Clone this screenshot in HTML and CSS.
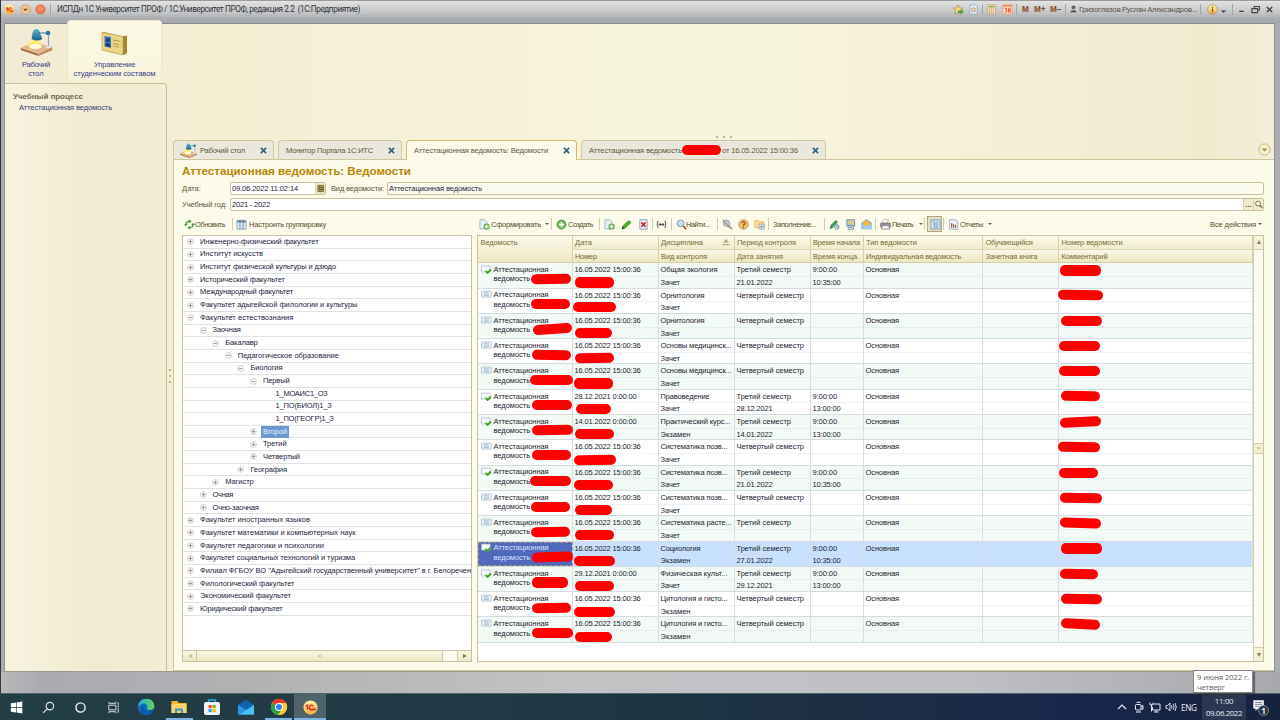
FILE: index.html
```html
<!DOCTYPE html>
<html lang="ru">
<head>
<meta charset="utf-8">
<title>1С:Университет ПРОФ</title>
<link rel="stylesheet" href="styles.css">
</head>
<body>
<svg class="defs" aria-hidden="true">
  <defs>
    <linearGradient id="blue" x1="0" y1="0" x2="0" y2="1"><stop offset="0" stop-color="#5fb5cf"/><stop offset="1" stop-color="#17658c"/></linearGradient>
    <linearGradient id="orange" x1="0" y1="0" x2="0" y2="1"><stop offset="0" stop-color="#fff6b0"/><stop offset="1" stop-color="#f3ae3c"/></linearGradient>
    <linearGradient id="edgeg" x1="0" y1="0" x2="1" y2="1"><stop offset="0" stop-color="#1583d4"/><stop offset="1" stop-color="#0b4f9e"/></linearGradient>
    <linearGradient id="edgetop" x1="0" y1="0" x2="1" y2="0"><stop offset="0" stop-color="#2aa8dc"/><stop offset="1" stop-color="#62d45a"/></linearGradient>
    <symbol id="lamp" viewBox="0 0 32 28">
      <path d="M0 20 13 14 32 19 18 26z" fill="#e3b88a"/><path d="M0 20v2l18 6v-2z" fill="#a2683f"/><path d="M18 26v2l14-6v-3z" fill="#bd875c"/>
      <path d="M11 11 7 18q8 6 14 0l-2-7z" fill="#fff16a" opacity=".85"/><ellipse cx="15" cy="18.500" rx="6" ry="2.500" fill="#fffde0"/>
      <path d="M12 5q1-4 4-4 3 0 3 3l3 7q-6 3-11 0z" fill="url(#blue)"/><path d="M18 5h9" stroke="#2b6f96" stroke-width="1"/><circle cx="27.500" cy="5" r="2.300" fill="#2478a3"/><path d="M28 7v11" stroke="#94a6b4" stroke-width="1.200"/><ellipse cx="28" cy="19" rx="3" ry="1.200" fill="#dbe3e8"/>
    </symbol>
    <symbol id="docplus" viewBox="0 0 12 12"><path d="M1 .8h5.500l2 2v8h-7.500z" fill="#e6f0f7" stroke="#8ea9bd" stroke-width=".8"/><circle cx="8.300" cy="8.300" r="3.500" fill="#6fae5a"/><path d="M8.300 6.200v4.200M6.200 8.300h4.200" stroke="#fff" stroke-width="1.200"/></symbol>
    <symbol id="plus" viewBox="0 0 12 12"><circle cx="6" cy="6" r="5" fill="#7bb55f" stroke="#4f8e42" stroke-width=".8"/><path d="M6 3.200v5.600M3.200 6h5.600" stroke="#fff" stroke-width="1.700"/></symbol>
    <symbol id="refresh" viewBox="0 0 12 12"><path d="M2 6.500a4 3.600 0 0 1 4-4M10 5.500a4 3.600 0 0 1-4 4" fill="none" stroke="#3f9a3f" stroke-width="1.500"/><path d="M5.500.5 8.500 2.500 5.500 4.500zM6.500 11.500 3.500 9.500 6.500 7.500zM0 5.500h4L2 8zM8 6.500h4L10 4z" fill="#3f9a3f"/></symbol>
    <symbol id="grid" viewBox="0 0 12 12"><path d="M1 1.500h10v9.500H1z" fill="#eaf3fa" stroke="#7294b2" stroke-width=".8"/><path d="M1 1.500h10V4H1z" fill="#7d99b5"/><path d="M4.300 1v10M7.700 1v10" stroke="#56789a" stroke-width=".9"/><path d="M1 7h10" stroke="#a6bfd4" stroke-width=".6"/></symbol>
    <symbol id="pencil" viewBox="0 0 12 12"><path d="M1 11 2 7.500 8.500 1.500 11 3.800 4.500 10z" fill="#4fae2c" stroke="#2b7a1e" stroke-width=".6"/><path d="M1 11 2 8.300 3.700 10z" fill="#1d4515"/></symbol>
    <symbol id="del" viewBox="0 0 12 12"><path d="M2 .8h8v10.400H2z" fill="#e9f1f7" stroke="#8199ad" stroke-width=".9"/><path d="M3.700 3.700 8.300 8.500M8.300 3.700 3.700 8.500" stroke="#d0202a" stroke-width="1.700"/></symbol>
    <symbol id="range" viewBox="0 0 12 12"><path d="M2.300 2Q.2 6 2.300 10M9.700 2Q11.800 6 9.700 10" fill="none" stroke="#454b52" stroke-width="1"/><path d="M3.500 6h5" stroke="#454b52"/><path d="M5 4 2.500 6 5 8zM7 4 9.500 6 7 8z" fill="#454b52"/></symbol>
    <symbol id="find" viewBox="0 0 12 12"><circle cx="5" cy="4.700" r="3.700" fill="#c5def2" stroke="#8297ab" stroke-width="1"/><path d="m7.700 7.500 3.500 3.500" stroke="#9c5b38" stroke-width="1.800"/></symbol>
    <symbol id="nofind" viewBox="0 0 12 12"><circle cx="5" cy="4.700" r="3.500" fill="#c9ccd0" stroke="#9298a2"/><path d="m7.500 7.500 3.500 3.500" stroke="#a9a096" stroke-width="1.800"/><path d="m1 1 8 9" stroke="#8d8f94" stroke-width="1.300"/></symbol>
    <symbol id="help" viewBox="0 0 12 12"><circle cx="6" cy="6" r="5.200" fill="#f4bd70" stroke="#b9824a" stroke-width=".8"/><path d="M4.200 4.700Q4.300 3 6 3t1.800 1.500Q7.800 5.600 6 6.600v.8M6 8.200v1.300" fill="none" stroke="#8a4318" stroke-width="1.200"/></symbol>
    <symbol id="folder" viewBox="0 0 12 12"><path d="M.8 1.500h4l1 1.500h5v6.500h-10z" fill="#f8dc91" stroke="#d2a855" stroke-width=".7"/><rect x="5.500" y="5.500" width="5.500" height="5.500" fill="#dfe7ea" stroke="#8293a0" stroke-width=".7"/><circle cx="8.300" cy="8.300" r="1.300" fill="#8694a2"/></symbol>
    <symbol id="sign" viewBox="0 0 12 12"><path d="M.8 10.500 2 6.500 7.500 1 10 3.200 4.500 8.800z" fill="#46935a"/><path d="m1 10.500 3-1.500" stroke="#234e3a"/><circle cx="8.500" cy="8.700" r="2.600" fill="#dcebef" stroke="#518080" stroke-width=".8"/><path d="M8.500 7v2h1.300" fill="none" stroke="#376878" stroke-width=".7"/></symbol>
    <symbol id="list" viewBox="0 0 12 12"><path d="M2 .8h8.500v7H2z" fill="#b9cad7" stroke="#526a7d" stroke-width=".7"/><path d="M3.500 2.500h5.500v2H3.500z" fill="#f2cb4d"/><path d="M3.500 7h5.700v4.300H3.500z" fill="#eaf1f5" stroke="#60798e" stroke-width=".8"/><path d="M4.500 9h3.500" stroke="#3b5872"/></symbol>
    <symbol id="mail" viewBox="0 0 12 12"><path d="M.8 4 6 .5 11.200 4v7H.8z" fill="#79b1de" stroke="#71a1cc" stroke-width=".6"/><ellipse cx="6" cy="4.600" rx="3.800" ry="3" fill="#f2ba3b"/><path d="M.8 5.500 6 8l5.200-2.500V11H.8z" fill="#a3cdee"/></symbol>
    <symbol id="print" viewBox="0 0 12 12"><path d="M3.500.8h5.500l-1 4h-6z" fill="#fff" stroke="#8c8c8c" stroke-width=".6"/><path d="M.8 4.500h10.400v4.500H.8z" fill="#9a9c9e" stroke="#555" stroke-width=".7"/><path d="M2.500 7h7l1 4h-9z" fill="#f4f4f4" stroke="#666" stroke-width=".7"/></symbol>
    <symbol id="report" viewBox="0 0 12 12"><path d="M1.500.8h7l2 2v8.400h-9z" fill="#e9f2f8" stroke="#8ba6bb" stroke-width=".8"/><path d="M4 9.500V4.500M8.300 9.500V6.500" stroke="#d03528" stroke-width="1.300"/><path d="M6.200 9.500V5.500" stroke="#388a3d" stroke-width="1.200"/></symbol>
    <symbol id="panel" viewBox="0 0 12 12"><path d="M1 1h10v10H1z" fill="#d9eaf5" stroke="#6992b2" stroke-width=".9"/><path d="M3 3h1.500v6H6M4.500 5.500H9M6 3.500h3M6 7.500h3M6 9h3" fill="none" stroke="#6287a6" stroke-width=".8"/></symbol>
    <symbol id="row" viewBox="0 0 12 10"><path d="M.5 1h10.500v6.500H.5z" fill="#eef5f9" stroke="#a2b6c4" stroke-width=".8"/><path d="M3 2.700h5.700M3 4.300h5.700M3 5.900h5.700" stroke="#a5bfd2" stroke-width="1"/></symbol>
    <symbol id="posted" viewBox="0 0 12 10"><path d="M.5 1h9.500v6.500H.5z" fill="#f5f9fa" stroke="#a8bac6" stroke-width=".8"/><path d="m5 6.300 2.200 2.200 3.600-3.800" fill="none" stroke="#43a424" stroke-width="2.100"/></symbol>
    <symbol id="logo1c" viewBox="0 0 16 16"><circle cx="8" cy="8" r="7.600" fill="url(#orange)"/><path d="M3 6.500 4.800 5.500v5M11 6.500Q10.300 5.500 9 5.500 6.800 5.700 6.800 8T9 10.400h4.500" fill="none" stroke="#df2a1a" stroke-width="1.500"/><path d="M13.500 8.600H9.500" stroke="#df2a1a" stroke-width=".8"/></symbol>
  </defs>
</svg>
<div class="screen">
  <header class="titlebar">
    <svg class="t-ico" viewBox="0 0 16 16"><use href="#logo1c"/></svg>
    <svg class="t-ico" viewBox="0 0 16 16"><circle cx="8" cy="8" r="7" fill="#efc890" stroke="#b79b77"/><path d="M4.500 7h7L8 10.500z" fill="#74502b"/></svg>
    <svg class="t-ico" viewBox="0 0 16 16"><circle cx="8" cy="8" r="7" fill="#f1764f" stroke="#cc8269"/><circle cx="8" cy="6.500" r="4" fill="#f88e66"/></svg>
    <i class="t-sep"></i>
    <span class="t-title" data-w="305">ИСПДн 1С Университет ПРОФ / 1С:Университет ПРОФ, редакция 2.2&nbsp; (1С:Предприятие)</span>
    <svg class="t-ico" viewBox="0 0 12 12"><path d="m5.500.8 1.500 3.400 3.800.4-2.800 2.500.8 3.700-3.300-1.900-3.300 1.900.8-3.700L.3 4.600l3.700-.4z" fill="#f8d680" stroke="#a9894f" stroke-width=".7"/><path d="M5.500 7h3V5.300L12 8.500l-3.500 3V10h-3z" fill="#51a83c"/></svg>
    <svg class="t-ico" viewBox="0 0 12 12"><path d="M2 1h6l2 2v8H2z" fill="#e3edf5" stroke="#89a2b8" stroke-width=".8"/><path d="m6 3.500.8 1.800 2 .1-1.500 1.300.5 1.900L6 7.600 4.200 8.600l.5-1.900-1.500-1.300 2-.1z" fill="#fbeab4" stroke="#95713a" stroke-width=".6"/></svg>
    <i class="t-sep"></i>
    <svg class="t-ico" viewBox="0 0 12 12"><path d="M1.500 1h9v10h-9z" fill="#f4e6c4" stroke="#c39b64" stroke-width=".8"/><path d="M3 3h6" stroke="#6aa040" stroke-width="1.400"/><path d="M3 5.500h6M3 7.500h6M3 9.500h6" stroke="#b6744c" stroke-dasharray="1.200 1"/></svg>
    <svg class="t-ico" viewBox="0 0 12 12"><path d="M1 1h10v10H1z" fill="#fbe5d2" stroke="#d89167" stroke-width=".8"/><path d="M1 1h10v2.500H1z" fill="#ee9a6b"/><path d="M3 5h2v4H3M4 7h1M7 5h2v4H7zM7 7h2" fill="none" stroke="#e0552a" stroke-width="1"/></svg>
    <i class="t-sep"></i>
    <b class="mem">M</b><b class="mem">M+</b><b class="mem">M−</b>
    <i class="t-sep"></i>
    <svg class="t-user" viewBox="0 0 8 10"><circle cx="4" cy="2.500" r="2.200" fill="#615f5b"/><path d="M.5 8.500Q.5 5.500 4 5.500t3.500 3z" fill="#615f5b"/></svg>
    <span class="t-name" data-w="118">Гризоглазов Руслан Александров...</span>
    <i class="t-sep"></i>
    <svg class="t-ico" viewBox="0 0 16 16"><circle cx="8" cy="8" r="7" fill="url(#orange)" stroke="#ae8350"/><path d="M8 3.500v1.800M8 6.500v6" stroke="#68532a" stroke-width="1.800"/></svg>
    <svg class="t-sys" viewBox="0 0 10 10"><path d="M2 6h6L5 9z" fill="#444"/></svg>
    <i class="t-sep"></i>
    <svg class="t-sys" viewBox="0 0 10 10"><path d="M2.500 7h5" stroke="#444" stroke-width="1.500"/></svg>
    <svg class="t-sys" viewBox="0 0 10 10"><path d="M3.500 3.500V1.700h5.800v4H7.500M1 4h6.300v4.500H1z" fill="none" stroke="#444" stroke-width="1.200"/></svg>
    <svg class="t-sys" viewBox="0 0 10 10"><path d="m2 2.200 6 5.600M8 2.200 2 7.800" stroke="#444" stroke-width="1.700"/></svg>
  </header>

  <main class="client">
    <aside class="left">
      <nav class="sections">
        <a class="section section-home"><svg class="lamp" viewBox="0 0 32 28"><use href="#lamp"/></svg><span data-w="28">Рабочий</span><span data-w="15.500">стол</span></a>
        <a class="section section-active">
          <svg class="card" viewBox="0 0 28 26"><path d="M1 1h2l22 5v17l-3 1L1 19z" fill="#b39342"/><path d="M1 1.500 22 5.500V24L1 19z" fill="#ecd486" stroke="#cda950" stroke-width=".8"/><path d="m22 5.500 4-1V22l-4 2z" fill="#a98532"/><path d="M3.500 5 10 6v11l-6.500-1.500z" fill="#3b76bd"/><circle cx="6.800" cy="9" r="1.900" fill="#173a6a"/><path d="M4.300 15q.4-3 2.500-3t2.800 4z" fill="#173a6a"/><path d="m12 9 7.500 1.500M12 12.500l6 1.200M12 15l6 1.200" stroke="#a58a4a" stroke-width=".8"/></svg>
          <span data-w="41">Управление</span><span data-w="82">студенческим составом</span></a>
      </nav>
      <section class="side">
        <h3 class="side-title"><span data-w="70">Учебный процесс</span></h3>
        <a class="side-link"><span data-w="93">Аттестационная ведомость</span></a>
      </section>
    </aside>
    <div class="splitter"><i></i><i></i><i></i></div>

    <section class="work">
      <div class="top-grip"><i></i><i></i><i></i></div>
      <nav class="tabs">
        <div class="tab tab-home"><svg class="tab-lamp" viewBox="0 0 32 28"><use href="#lamp"/></svg><span data-w="45">Рабочий стол</span><svg class="x" viewBox="0 0 8 8"><path d="m1 1 6 6M7 1 1 7"/></svg></div>
        <div class="tab tab-monitor"><span data-w="87">Монитор Портала 1С:ИТС</span><svg class="x" viewBox="0 0 8 8"><path d="m1 1 6 6M7 1 1 7"/></svg></div>
        <div class="tab tab-current"><span data-w="134">Аттестационная ведомость: Ведомости</span><svg class="x" viewBox="0 0 8 8"><path d="m1 1 6 6M7 1 1 7"/></svg></div>
        <div class="tab tab-doc"><span data-w="93">Аттестационная ведомость</span><i class="tab-ink"></i><span data-w="76">от 16.05.2022 15:00:36</span><svg class="x" viewBox="0 0 8 8"><path d="m1 1 6 6M7 1 1 7"/></svg></div>
        <svg class="tab-more" viewBox="0 0 13 13"><circle cx="6.500" cy="6.500" r="5.600" fill="#f7f1cc" stroke="#c2b681"/><path d="M3.500 5.500h6l-3 3z" fill="#a5935a"/></svg>
      </nav>
      <div class="page">
        <h1 class="heading"><span data-w="229">Аттестационная ведомость: Ведомости</span></h1>
        <div class="field-row">
          <label class="lbl-date"><span data-w="19">Дата:</span></label>
          <div class="input date"><span data-w="66">09.06.2022 11:02:14</span><svg class="cal" viewBox="0 0 10 12"><path d="M2.500 3.500h5.500v5.500H2.500z" fill="#b7a765"/><path d="M2 2.500h6.500v7H2zM2 5h6.500M2 7.200h6.500M4.200 2v7.500M6.500 2v7.500" fill="none" stroke="#75652e" stroke-width="1"/></svg></div>
          <label class="lbl-kind"><span data-w="53">Вид ведомости:</span></label>
          <div class="input kind"><span data-w="93">Аттестационная ведомость</span></div>
        </div>
        <div class="field-row">
          <label class="lbl-year"><span data-w="45">Учебный год:</span></label>
          <div class="input year"><span data-w="38">2021 - 2022</span><span class="dots">...</span><svg class="mag" viewBox="0 0 10 12"><circle cx="4.500" cy="5" r="2.700" fill="#fff" stroke="#75652e"/><path d="m6.500 7 2.500 2.500" stroke="#75652e" stroke-width="1.500"/></svg></div>
        </div>
        <div class="columns">
          <div class="tree-col">
            <div class="bar bar-tree">
              <svg><use href="#refresh"/></svg><span data-w="33">Обновить</span><i class="sep"></i><svg><use href="#grid"/></svg><span data-w="80">Настроить группировку</span>
            </div>
            <div class="tree">
              <div class="tree-rows" id="tree"></div>
              <div class="hscroll"><b class="hs-left"></b><b class="hs-thumb"></b><b class="hs-track"></b><b class="hs-right"></b></div>
            </div>
          </div>
          <div class="table-col">
            <div class="bar bar-table">
              <svg><use href="#docplus"/></svg><span data-w="51">Сформировать</span><i class="caret"></i><i class="sep"></i>
              <svg><use href="#plus"/></svg><span data-w="27.500">Создать</span><i class="sep"></i>
              <svg><use href="#docplus"/></svg><svg><use href="#pencil"/></svg><svg><use href="#del"/></svg><i class="sep"></i>
              <svg><use href="#range"/></svg><i class="sep"></i>
              <svg><use href="#find"/></svg><span data-w="27">Найти...</span><i class="sep"></i>
              <svg><use href="#nofind"/></svg><svg><use href="#help"/></svg><svg><use href="#folder"/></svg><i class="sep"></i>
              <span data-w="46">Заполнение...</span><i class="sep"></i>
              <svg><use href="#sign"/></svg><svg><use href="#list"/></svg><svg><use href="#mail"/></svg><i class="sep"></i>
              <svg><use href="#print"/></svg><span data-w="23.500">Печать</span><i class="caret"></i><i class="sep"></i>
              <b class="pressed"><svg><use href="#panel"/></svg></b><i class="sep"></i>
              <svg><use href="#report"/></svg><span data-w="25">Отчеты</span><i class="caret"></i>
              <span class="all" data-w="46">Все действия</span><i class="caret"></i>
            </div>
            <div class="table">
              <div class="table-main">
                <div class="thead" id="thead"></div>
                <div id="rows"></div>
              </div>
              <div class="vscroll"><b class="vs-up"></b><b class="vs-thumb"></b><b class="vs-down"></b></div>
            </div>
          </div>
        </div>
      </div>
    </section>
  </main>
  <footer class="status"></footer>

  <div class="taskbar">
    <div class="task"><svg viewBox="0 0 16 16"><path d="m2 3.500 5.500-.8v4.900H2zM8.200 2.600l6-.9v5.900h-6zM2 8.400h5.500v4.900L2 12.500zM8.200 8.400h6v5.900l-6-.9z" fill="#fff"/></svg></div>
    <div class="task"><svg viewBox="0 0 16 16"><circle cx="9.500" cy="6.500" r="4" fill="none" stroke="#e4e9eb" stroke-width="1.200"/><path d="m6.600 9.400-4.300 4.300" stroke="#e4e9eb" stroke-width="1.200"/></svg></div>
    <div class="task"><svg viewBox="0 0 16 16"><circle cx="8" cy="8" r="4.900" fill="none" stroke="#f0f3f4" stroke-width="1.500"/></svg></div>
    <div class="task"><svg viewBox="0 0 16 16"><path d="M3 5.500h7.500v5H3zM3 2v1.500h7.500V2M3 14v-1.500h7.500V14M13 2.500v3.300M13 8.500v5M12 7h2" fill="none" stroke="#dfe5e7"/></svg></div>
    <div class="task"><svg class="big" viewBox="0 0 18 18"><circle cx="9" cy="9" r="8.300" fill="url(#edgeg)"/><path d="M1 8Q2.500.7 9.500.7T17.400 8q0 4-5 4-2.700 0-2.500-2 1-1.500-.5-3.500Q7 4 1 8z" fill="url(#edgetop)"/><path d="M6.500 9q0 6 7.500 5.500 1.500-.2 2-1-2 4-7 3.800Q3 16 3.500 11 4 7.500 7.700 6.800 6.500 7.800 6.500 9z" fill="#0c5ba9"/></svg></div>
    <div class="task open"><svg class="big" viewBox="0 0 18 18"><path d="M1.500 3h6l1.500 2h7.500v10h-15z" fill="#f1b62b"/><path d="M1.500 6h15v9h-15z" fill="#fcd667"/><path d="M5 15v-4.500h8V15h-2v-2.500H7V15z" fill="#3d92d4"/></svg></div>
    <div class="task"><svg class="big" viewBox="0 0 18 18"><path d="M5.500 4.500V2h7v2.500" fill="none" stroke="#2bb0e8" stroke-width="1.400"/><rect x="1" y="4" width="16" height="13" rx="2" fill="#f1f3f4"/><path d="M5.500 7h3.200v3.200H5.500z" fill="#e84e28"/><path d="M9.500 7h3.200v3.200H9.500z" fill="#80b71f"/><path d="M5.500 11h3.200v3.200H5.500z" fill="#20a3e5"/><path d="M9.500 11h3.200v3.200H9.500z" fill="#fab817"/></svg></div>
    <div class="task"><svg class="big" viewBox="0 0 18 18"><path d="m1 7 8-5.500L17 7z" fill="#1160a8"/><path d="M1 7h16v9.500H1z" fill="#2a98df"/><path d="m1 7 8 5 8-5H1z" fill="#1a6fbd"/><path d="M17 7v9.500H3z" fill="#48c2ef"/><path d="m1.500 6.500 7.500 5 7.500-5z" fill="#1563b0"/></svg></div>
    <div class="task open"><svg class="big" viewBox="0 0 18 18"><circle cx="9" cy="9" r="8" fill="#fcc934"/><path d="M9 9 2 5A8 8 0 0 1 16 5H9z" fill="#e8392b"/><path d="M2 5a8 8 0 0 0 6.300 12L12 11 9 9z" fill="#2ca04b"/><path d="M16.200 5.300H9L12.300 11 8.300 17A8 8 0 0 0 16.200 5.300z" fill="#fcc934"/><circle cx="9" cy="9" r="4" fill="#fff"/><circle cx="9" cy="9" r="3" fill="#367fe8"/></svg></div>
    <div class="task current"><svg class="logo" viewBox="0 0 16 16"><use href="#logo1c"/></svg></div>
    <div class="tray">
      <svg viewBox="0 0 12 12"><path d="m2 8 4-4 4 4" fill="none" stroke="#e6eaf0" stroke-width="1.200"/></svg>
      <svg viewBox="0 0 12 12"><rect x="2.500" y="3.500" width="5.500" height="5.500" rx="1" fill="none" stroke="#e6eaf0"/><path d="M8 5.500 10 4.500v4L8 7.500M3.500 1.300h4M3 11h5" fill="none" stroke="#e6eaf0"/></svg>
      <svg viewBox="0 0 12 12"><path d="M4.500 3H11v6H3.500V6M7.200 9v2M5 11h4.500M1 1.500v2.300h3V1.500M2.500 4v6.500" fill="none" stroke="#e6eaf0"/></svg>
      <svg viewBox="0 0 12 12"><path d="M1 4.500h1.700L5 2v8L2.700 7.500H1zM6.500 4.300q1 1.700 0 3.400M8.300 3.200q1.700 2.800 0 5.600M10 2q2.500 4 0 8" fill="none" stroke="#e6eaf0" stroke-width=".9"/></svg>
      <span class="lang"><span data-w="15.500">ENG</span></span>
      <div class="clock"><span data-w="18.500">11:00</span><span data-w="36">09.06.2022</span></div>
      <div class="notes"><svg viewBox="0 0 16 14"><path d="M1.500 1h12v9.500H7l-3 2.500v-2.500H1.500z" fill="#f6f8fb"/><path d="M3.500 3.500h8M3.500 5.700h8M3.500 8h5" stroke="#566077" stroke-width=".9"/></svg><b class="badge">1</b></div>
      <div class="tip"><span data-w="52">9 июня 2022 г.</span><span data-w="28">четверг</span></div>
    </div>
  </div>
</div>
<script src="app.js"></script>
</body>
</html>
```

FILE: styles.css
```css
* { box-sizing: border-box; }
body { margin: 0; font-family: "Liberation Sans", Arial, sans-serif; font-size: 7.5px; color: #2c2c3c; overflow: hidden; }
.defs { position: absolute; width: 0; height: 0; }
.screen { width: 1280px; height: 720px; display: flex; flex-direction: column; background: #abadb0; border-left: 1px solid #3b3437; overflow: hidden; }
span { white-space: nowrap; }
i { font-style: normal; }

.titlebar { height: 23px; flex: none; border-top: 1px solid #9b9b9d; background: linear-gradient(#e2e2e3, #c3c4c6 55%, #a9abae 80%, #a6a8ab); display: grid; align-items: center; padding: 0 0 6px 3px;
  grid-template-columns: 16px 15px 15px 5px 898px 15px 14px 4px 16px 14px 6px 12px 16px 15px 5px 9px 121px 7px 12px 13px 5px 14px 14px 14px; }
.t-ico { width: 11px; height: 11px; }
.t-sep { height: 11px; width: 1px; background: #a4a5a8; }
.t-title { font-family: Roboto, sans-serif; font-size: 8.2px; color: #333339; padding-left: 2px; justify-self: start; }
.t-name { font-family: Roboto, sans-serif; font-size: 7.8px; color: #60564a; justify-self: start; }
.t-user { width: 7px; height: 9px; }
.t-sys { width: 9px; height: 9px; }
.mem { font-size: 8.2px; color: #874b29; }

.client { height: 649px; flex: none; margin: 0 5px 0 3px; border: 1px solid #8f9298; border-top-color: #868c97; border-bottom-color: #98988f; display: grid; grid-template-columns: 162px 6px 1fr;
  background: linear-gradient(90deg, #f2ecd5, #f4eed5 18%, #f8f5de 55%, #f5f0d8 75%, #f0ead1 95%, #f4eeda); }
.left { display: flex; flex-direction: column; }
.sections { height: 59px; display: grid; grid-template-columns: 62px 95px; flex: none; }
.section { display: flex; flex-direction: column; align-items: center; color: #36408c; line-height: 9px; font-size: 7.6px; }
.section-home { padding-top: 4px; }
.section-active { background: linear-gradient(#fbf9e4, #faf7e0 65%, rgba(250,247,224,.3)); margin-top: -4px; padding-top: 10px; border-radius: 4px 4px 0 0; border: 1px solid #eee8c8; border-bottom: 0; height: 62px; }
.lamp { width: 33px; height: 28px; margin-bottom: 4px; }
.card { width: 28px; height: 26px; margin-bottom: 3px; }
.side { flex: 1; border: 1px solid #c9c09a; border-left: 0; border-bottom: 0; border-radius: 0 4px 0 0; padding: 8px 0 0 8px; background: linear-gradient(90deg, #f7f3df, #f0ebd1 55%, #f2edd5); }
.side-title { margin: 0; height: 10px; line-height: 10px; font-size: 8px; color: #726b4d; font-weight: bold; }
.side-link { display: block; margin: 1px 0 0 6px; height: 10px; line-height: 10px; color: #343d80; }
.splitter { display: flex; flex-direction: column; justify-content: center; align-items: center; gap: 4px; padding-top: 56px; }
.splitter i, .top-grip i { width: 2px; height: 2px; background: #bcb38d; }
.work { display: flex; flex-direction: column; min-width: 0; }
.top-grip { height: 116px; display: flex; gap: 5px; justify-content: center; align-items: flex-end; padding-bottom: 2px; flex: none; }
.tabs { height: 19px; display: flex; flex: none; align-items: stretch; }
.tab { display: flex; align-items: center; height: 19px; background: #eae8dc; border: 1px solid #cfc8a5; border-bottom: 0; border-radius: 4px 4px 0 0; color: #5e583f; margin-right: 4px; padding-right: 6px; font-size: 7.6px; }
.tab .x { margin-left: auto; }
.x { width: 7px; height: 7px; stroke: #235d81; stroke-width: 1.7; fill: none; flex: none; }
.tab-home { width: 101px; padding-left: 6px; }
.tab-lamp { width: 17px; height: 15px; margin-right: 3px; }
.tab-monitor { width: 124px; padding-left: 7px; }
.tab-current { width: 171px; padding: 0 6px 0 7px; background: #fcfaea; border-color: #d0b969; height: 20px; z-index: 1; }
.tab-doc { width: 245px; padding-left: 7px; }
.tab-ink { width: 39px; height: 10px; border-radius: 5px; background: #f00; margin: 0; }
.tab-ink + span { margin-left: 1px; }
.tab-more { width: 13px; height: 13px; margin: 3px 3px 0 auto; }
.page { flex: 1; min-height: 0; background: #fcfaea; border: 1px solid #cdc69e; border-right: 0; padding: 4px 10px 8px 8px; display: flex; flex-direction: column; }
.heading { margin: 0; font-size: 11.6px; line-height: 13px; height: 16px; flex: none; color: #b88605; }
.field-row { height: 16.6px; display: flex; align-items: center; flex: none; color: #5a543c; }
.lbl-date, .lbl-year { width: 48px; }
.lbl-kind { width: 61px; padding-left: 5px; }
.input { height: 13px; border: 1px solid #c8c09a; border-radius: 2px; background: #fff; display: flex; align-items: center; padding-left: 1px; color: #24243a; }
.date { width: 96px; }
.kind { flex: 1; background: #fcfbf0; }
.year { flex: 1; }
.cal, .mag { height: 11px; width: 10px; background: #f1ecd0; border-left: 1px solid #d6cfab; margin-left: auto; }
.dots { margin-left: auto; width: 10px; height: 11px; line-height: 11px; background: #f1ecd0; border-left: 1px solid #d6cfab; text-align: center; color: #54491f; font-weight: bold; }
.mag { margin-left: 0; }
.columns { flex: 1; min-height: 0; display: grid; grid-template-columns: 290px 1fr; gap: 5px; }
.tree-col, .table-col { display: flex; flex-direction: column; min-width: 0; min-height: 0; }
.bar { height: 21.8px; display: grid; align-items: center; color: #55502f; flex: none; }
.bar svg { width: 11px; height: 11px; display: block; }
.bar-tree { grid-template-columns: 11px 37px 4px 13px 84px; padding-left: 2px; }
.bar-table { padding-left: 2px; grid-template-columns: 12px 54px 6px 5px 12px 31px 5px 17px 17px 14px 4px 15px 5px 10px 31px 5px 16px 16px 14px 5px 51px 5px 16px 16px 14px 5px 12px 27px 5px 3px 16px 5px 12px 28px 8px 1fr 6px; }
.sep { width: 1px; height: 12px; background: #d0caae; }
.caret { border: 2px solid transparent; border-top: 2px solid #6b643d; border-bottom: 0; width: 0; }
.all { justify-self: end; margin-right: 2px; }
.pressed { width: 15px; height: 16px; border: 1px solid #b0a57c; background: #e9e2c2; padding: 1.5px; display: block; }
.tree, .table { border: 1px solid #c8c19b; border-top: 1px solid #cdc6a6; background: #fff; flex: 1; min-height: 0; }
.tree { display: flex; flex-direction: column; }
.tree-rows { flex: 1; min-height: 0; overflow: hidden; }
.node { height: 12.666px; border-bottom: 1px solid #dde2e2; display: flex; align-items: center; color: #23233a; }
.node svg { width: 7px; height: 7px; margin-right: 6px; flex: none; }
.node .gap { width: 13px; flex: none; }
.node .label { line-height: 12px; }
.node.sel .label { background: #6c96d0; color: #e9f2ff; padding: 0 2px; margin-left: -2px; }
.hscroll { height: 11px; display: grid; grid-template-columns: 14px 246px 14px 14px; border-top: 1px solid #cdc6a6; background: #fbfaf0; flex: none; }
.hs-left, .hs-right, .hs-thumb { background: linear-gradient(#f8f5e2, #ece7c8); border-right: 1px solid #cdc6a6; display: grid; place-items: center; }
.hs-right { border: 0; border-left: 1px solid #cdc6a6; }
.hs-left::before { content: ""; border: 2.5px solid transparent; border-right: 4px solid #c4bfa4; border-left: 0; }
.hs-right::before { content: ""; border: 2.5px solid transparent; border-left: 4px solid #7b775f; border-right: 0; }
.hs-thumb::before { content: ""; width: 3px; height: 2px; background: #cfc8a6; }

.table { display: grid; grid-template-columns: 1fr 10px; }
.table-main { overflow: hidden; }
.thead, .row { display: grid; grid-template-columns: 94.5px 86px 76px 76px 53px 119.5px 76px 194px; }
.thead { height: 27.3px; background: linear-gradient(#fbf9ea, #f0ebcd 49%, #fbf9ea 52%, #ece6c2); color: #786d36; border-bottom: 1px solid #d5cea8; }
.hcell { display: grid; grid-template-rows: 13.5px 13px; border-right: 1px solid #d6cfab; }
.hcell > div { padding-left: 2.5px; display: flex; align-items: center; }
.hcell > div + div { border-top: 1px solid #ddd6b4; }
.hcell:first-child { background: linear-gradient(#fbf9ea, #ede7c5); }
.hcell:first-child > div + div { border-top: 0; }
.sort { width: 8px; height: 7px; margin: 0 4px 0 auto; }
.row { height: 25.3px; border-bottom: 1px solid #d3dcdf; position: relative; color: #22222f; }
.row.alt { background: #f3faf6; }
.row.sel { background: #c9e1ff; }
.cell { border-right: 1px solid #d8dfe2; display: grid; grid-template-rows: 12.65px 11.65px; min-width: 0; }
.cell > div { padding-left: 2px; line-height: 14px; }
.cell > div + div { border-top: 1px solid rgba(200,214,220,.3); line-height: 12.5px; }
.cell.main { grid-template-columns: 13px 1fr; grid-template-rows: 11.3px 9px; padding: .8px 0 0 2.5px; }
.cell.main svg { width: 11px; height: 9.5px; grid-row: 1 / 3; margin-top: 1px; }
.cell.main div, .cell.main div + div { padding: 0; border: 0; line-height: 12px; }
.cell.main div + div { line-height: 8px; }
.row.sel .cell.main { background: #5069bd; color: #d9e4ff; outline: 1px dashed #a19a78; outline-offset: -1px; }
.ink { position: absolute; height: 10.3px; border-radius: 5px; background: #f00; z-index: 1; }
.vscroll { border-left: 1px solid #d6cfab; background: #faf9f2; display: flex; flex-direction: column; align-items: stretch; }
.vs-up, .vs-down { height: 14px; background: #f3efd8; display: grid; place-items: center; }
.vs-up::before { content: ""; border: 2.5px solid transparent; border-bottom: 4px solid #827e70; border-top: 0; }
.vs-down::before { content: ""; border: 2.5px solid transparent; border-top: 4px solid #827e70; border-bottom: 0; }
.vs-up { border-bottom: 1px solid #d6cfab; }
.vs-thumb { height: 11px; margin-top: 193px; background: #f2edd1; border: 1px solid #d6cfab; border-width: 1px 0; display: grid; place-items: center; }
.vs-thumb::before { content: ""; width: 3px; height: 2px; background: #cdc6a4; }
.vs-down { margin-top: auto; border-top: 1px solid #d6cfab; }

.status { height: 21px; flex: none; background: linear-gradient(90deg, #b8b9bb, #a9abae 3%, #b1b2b4 20%, #c2c3c5 45%, #bfc0c3 75%, #a8a9ad); }
.taskbar { height: 27px; flex: none; display: flex; margin-left: -1px; padding-left: 1px; border-top: 1px solid #52636a; background: linear-gradient(90deg, #233d45, #213943 40%, #1c2f42 65%, #19264a 85%, #17223c); font-family: "Open Sans", sans-serif; }
.task { width: 32.5px; display: grid; place-items: center; flex: none; margin-left: -.5px; }
.task svg { width: 15px; height: 15px; }
.task svg.big { width: 18px; height: 18px; }
.task:nth-child(n+4) { width: 33.2px; margin-left: 0; }
.task:nth-child(1) { margin-left: -1px; }
.task:nth-child(n+4).open { box-shadow: inset 0 -2px #7fb3e0; width: 27px; margin: 0 3px; }
.task:nth-child(n+4).current { background: #50626a; box-shadow: inset 0 -2px #7fb3e0; width: 32px; margin-left: -1px; }
.tray { margin-left: auto; display: flex; align-items: center; position: relative; color: #e8ebf2; }
.tray svg { width: 12px; height: 12px; margin-right: 4px; }
.tray svg:first-child { margin-left: -3px; margin-right: 5px; }
.lang { font-size: 8.2px; width: 21px; }
.clock { width: 44px; height: 26px; font-size: 7.8px; display: flex; flex-direction: column; align-items: center; justify-content: center; line-height: 12px; background: rgba(255,255,255,.09); padding-bottom: 1px; }
.notes { position: relative; width: 34px; padding: 5px 0 0 7px; height: 26px; }
.notes svg { width: 14px; height: 13px; margin: 0; }
.tray .notes svg:first-child { margin: 0 0 0 -1px; }
.badge { position: absolute; left: 12px; top: 11px; width: 11px; height: 11px; border-radius: 6px; background: #2c3341; border: 1px solid #7e8797; font-size: 8px; line-height: 9px; text-align: center; }
.tip { position: absolute; right: 27px; top: -24px; width: 60px; height: 23px; border: 1px solid #85868a; background: #fff; color: #5e6067; font-size: 7.6px; line-height: 10px; display: flex; flex-direction: column; padding: 1px 3px; align-items: flex-start; box-shadow: 2px 2px 1px rgba(50,50,50,.55); z-index: 2; }
```

FILE: app.js
```js
// Tree: [level, marker, label, label width]
const tree = [
  [0, '+', 'Инженерно-физический факультет', 118.5], [0, '+', 'Институт искусств', 63],
  [0, '+', 'Институт физической культуры и дзюдо', 136], [0, '+', 'Исторический факультет', 85],
  [0, '+', 'Международный факультет', 93], [0, '+', 'Факультет адыгейской филологии и культуры', 157.5],
  [0, '-', 'Факультет естествознания', 93.5], [1, '-', 'Заочная', 28], [2, '-', 'Бакалавр', 32.5],
  [3, '-', 'Педагогическое образование', 101], [4, '-', 'Биология', 32], [5, '-', 'Первый', 26.5],
  [6, '', '1_МОАИС1_ОЗ', 52], [6, '', '1_ПО(БИОЛ)1_З', 56], [6, '', '1_ПО(ГЕОГР)1_З', 58],
  [5, '+', 'Второй', 24], [5, '+', 'Третий', 23.5], [5, '+', 'Четвертый', 37], [4, '+', 'География', 36.5],
  [2, '+', 'Магистр', 28.5], [1, '+', 'Очная', 20.5], [1, '+', 'Очно-заочная', 46],
  [0, '+', 'Факультет иностранных языков', 110], [0, '+', 'Факультет математики и компьютерных наук', 155.5],
  [0, '+', 'Факультет педагогики и психологии', 124], [0, '+', 'Факультет социальных технологий и туризма', 155],
  [0, '+', 'Филиал ФГБОУ ВО "Адыгейский государственный университет" в г. Белоречен', 271],
  [0, '+', 'Филологический факультет', 94.5], [0, '+', 'Экономический факультет', 91], [0, '+', 'Юридический факультет', 82.5]
];
document.getElementById('tree').innerHTML = tree.map(([level, mark, label, w]) => {
  const icon = mark ? `<svg viewBox="0 0 8 8"><circle cx="4" cy="4" r="3.300" fill="#fafafa" stroke="#b4b4b4" stroke-width=".7"/><path d="M2 4h4${mark === '+' ? 'M4 2v4' : ''}" stroke="#858585" stroke-width=".9"/></svg>` : '<i class="gap"></i>';
  return `<div class="node${label === 'Второй' ? ' sel' : ''}" style="padding-left:${4 + level * 12.6}px">${icon}<span class="label"><span data-w="${w}">${label}</span></span></div>`;
}).join('');

const heads = [['Ведомость', 37, '', 0], ['Дата', 17, 'Номер', 22], ['Дисциплина', 42, 'Вид контроля', 46],
  ['Период контроля', 59, 'Дата занятия', 46], ['Время начала', 47, 'Время конца', 44],
  ['Тип ведомости', 51, 'Индивидуальная ведомость', 95], ['Обучающийся', 47, 'Зачетная книга', 52], ['Номер ведомости', 61, 'Комментарий', 46]];
document.getElementById('thead').innerHTML = heads.map(([a, aw, b, bw], i) =>
  `<div class="hcell"><div><span data-w="${aw}">${a}</span>${i === 2 ? '<svg class="sort" viewBox="0 0 8 7"><path d="M4 0 7 3.500H1zM.500 5h7v1.200h-7z" fill="#b5ab78"/></svg>' : ''}</div><div>${b ? `<span data-w="${bw}">${b}</span>` : ''}</div></div>`).join('');

const widths = {
  'Общая экология': 57, 'Орнитология': 44, 'Основы медицинск...': 71, 'Правоведение': 49, 'Практический курс...': 70,
  'Систематика позв...': 67, 'Систематика расте...': 71, 'Социология': 40, 'Физическая культ...': 67, 'Цитология и гисто...': 67,
  'Зачет': 19.5, 'Экзамен': 30, 'Третий семестр': 54.5, 'Четвертый семестр': 67.5, 'Основная': 33.5, 'Аттестационная': 55, 'ведомость': 36.5,
  '9:00:00': 24.5, '10:35:00': 28, '13:00:00': 28
};
const text = s => {
  const w = widths[s] || { 19: 66, 18: 62, 10: 36 }[s.length];
  return s ? `<span data-w="${w}">${s}</span>` : '';
};
const D = '16.05.2022 15:00:36', T = 'Третий семестр', Q = 'Четвертый семестр';
// Row: date, subject, control, term, lesson date, start, end, strokes [x, centre y, width, tilt] in three columns
const rows = [
  [D, 'Общая экология', 'Зачет', T, '21.01.2022', '9:00:00', '10:35:00', [531, 279, 40, -1], [575, 282.5, 39, 0], [1060, 270.5, 41, 0]],
  [D, 'Орнитология', 'Зачет', Q, '', '', '', [531, 304.3, 38.5, 0], [573, 307.3, 43, 0], [1058, 295.2, 45, 1]],
  [D, 'Орнитология', 'Зачет', Q, '', '', '', [532.5, 328.7, 38.5, -4], [575, 333, 36.5, 0], [1061, 321, 41, 0]],
  [D, 'Основы медицинск...', 'Зачет', Q, '', '', '', [532, 355, 38.5, 1], [575, 358.5, 39, -1], [1059, 346, 41, 0]],
  [D, 'Основы медицинск...', 'Зачет', Q, '', '', '', [530, 380, 43, 0], [574, 383.5, 38.5, 0], [1059, 371, 41, 0]],
  ['28.12.2021 0:00:00', 'Правоведение', 'Зачет', T, '28.12.2021', '9:00:00', '13:00:00', [531.5, 405.3, 40.5, 0], [575.5, 408.7, 35, 0], [1061, 396.5, 39, 1]],
  ['14.01.2022 0:00:00', 'Практический курс...', 'Экзамен', T, '14.01.2022', '9:00:00', '13:00:00', [531.5, 430.5, 41, -1], [575, 434, 39, 0], [1060, 422.5, 41, -3]],
  [D, 'Систематика позв...', 'Зачет', Q, '', '', '', [532, 455.2, 39, 0], [573.5, 459.7, 41.5, -1], [1058, 447.5, 42, 1]],
  [D, 'Систематика позв...', 'Зачет', T, '21.01.2022', '9:00:00', '10:35:00', [530, 481.3, 41, 0], [574, 484.7, 38.5, 0], [1059, 472.7, 39, 0]],
  [D, 'Систематика позв...', 'Зачет', Q, '', '', '', [531, 506.7, 38.5, 0], [575, 510.3, 36.5, 0], [1060, 498, 42, 1]],
  [D, 'Систематика расте...', 'Зачет', T, '', '', '', [531, 532.2, 39, -1], [575, 535.3, 39, 0], [1060, 523.3, 41, 2]],
  [D, 'Социология', 'Экзамен', T, '27.01.2022', '9:00:00', '10:35:00', [531.5, 557.5, 41, -2], [574, 561, 41, 0], [1061, 548.5, 41, 0]],
  ['29.12.2021 0:00:00', 'Физическая культ...', 'Зачет', T, '29.12.2021', '9:00:00', '13:00:00', [531.5, 582.7, 36.5, 0], [575, 586.3, 39, 0], [1060, 574.5, 38, 1]],
  [D, 'Цитология и гисто...', 'Экзамен', Q, '', '', '', [531.5, 608, 38.5, -1], [574, 612, 41, 0], [1061, 599.5, 41, 1]],
  [D, 'Цитология и гисто...', 'Экзамен', Q, '', '', '', [531.5, 633.3, 41, 0], [575, 637, 37, 0], [1061, 624, 39, 3]]
];
const left = 478, top0 = 263.3, pitch = 25.3;
document.getElementById('rows').innerHTML = rows.map((r, i) => {
  const cell = (a, b) => `<div class="cell"><div>${text(a)}</div><div>${text(b)}</div></div>`;
  const ink = r.slice(7).map(([x, y, w, a]) => `<i class="ink" style="left:${x - left}px;top:${(y - 5.15 - top0 - i * pitch).toFixed(2)}px;width:${w}px;transform:rotate(${a}deg)"></i>`).join('');
  return `<div class="row${i === 11 ? ' sel' : i % 2 && i !== 11 ? '' : ' alt'}"><div class="cell main"><svg><use href="#${r[5] ? 'posted' : 'row'}"/></svg><div>${text('Аттестационная')}</div><div>${text('ведомость')}</div></div>`
    + cell(r[0], '') + cell(r[1], r[2]) + cell(r[3], r[4]) + cell(r[5], r[6]) + cell('Основная', '') + cell('', '') + cell('', '') + ink + '</div>';
}).join('');

// Tune tracking so that each caption takes its nominal width
document.querySelectorAll('[data-w]').forEach(el => {
  const w = +el.dataset.w;
  const now = el.getBoundingClientRect().width;
  el.style.letterSpacing = ((w - now) / el.textContent.length).toFixed(4) + 'px';
});
```
